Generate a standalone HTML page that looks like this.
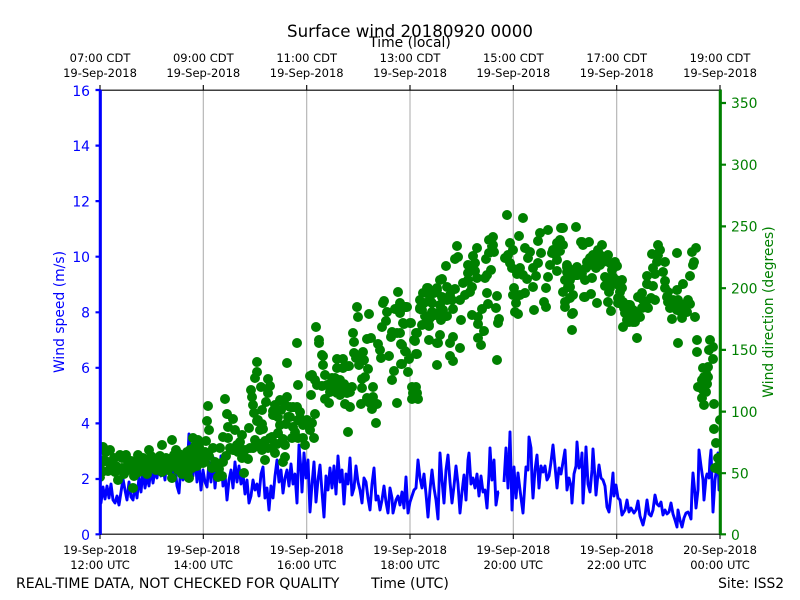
<!DOCTYPE html>
<html>
<head>
<meta charset="utf-8">
<style>
html,body{margin:0;padding:0;background:#fff;width:800px;height:600px;overflow:hidden}
svg{display:block}
text{font-family:"DejaVu Sans",sans-serif}
</style>
</head>
<body>
<svg width="800" height="600" viewBox="0 0 800 600" xmlns="http://www.w3.org/2000/svg">
<defs><clipPath id="c"><rect x="100" y="90" width="620" height="444.5"/></clipPath></defs>
<rect width="800" height="600" fill="#fff"/>
<path d="M203.3 90V534M306.7 90V534M410 90V534M513.3 90V534M616.7 90V534" stroke="#b0b0b0" stroke-width="1.1" fill="none"/>
<g clip-path="url(#c)">
<path fill="none" stroke="#00f" stroke-width="2.9" stroke-linejoin="round" d="M100 490L101 503 103 487 105 499 107 486 109 498 111 484 113 500 115 503 117 496 119 505 121 492 123 479 125 490 127 500 129 482 131 497 133 500 135 485 137 498 139 477 141 492 143 470 145 488 147 476 149 486 151 468 153 483 155 470 157 478 159 462 161 476 163 466 165 480 167 455 169 470 171 462 173 478 175 466 177 486 179 493 181 464 183 480 185 458 187 474 189 434 191 468 193 476 195 456 197 482 199 464 201 490 203 470 205 482 207 487 209 462 211 482 213 457 215 488 217 466 219 478 221 456 223 486 225 474 227 500 229 480 231 470 233 488 235 462 237 482 239 466 241 484 243 474 245 494 247 480 249 503 251 496 253 480 255 490 257 484 259 496 261 474 263 467 265 498 267 488 269 510 271 486 273 498 275 476 277 460 279 482 281 470 283 493 285 478 287 470 289 486 291 464 293 484 295 474 297 503 299 445 301 470 302 492 304 453 306 478 308 460 310 512 312 484 314 462 316 502 318 480 320 465 322 492 324 517 326 476 328 490 330 468 332 488 334 466 336 494 338 456 340 482 342 470 344 504 346 474 348 484 350 458 352 495 354 488 356 466 358 482 360 490 362 503 364 478 366 482 368 498 370 510 372 484 374 468 376 500 378 496 380 510 382 500 384 486 386 502 388 513 390 488 392 498 393 513 396 500 398 496 400 505 402 492 404 508 406 477 408 513 410 502 412 496 414 490 416 488 418 460 420 478 422 488 424 474 426 494 428 517 430 490 432 470 434 488 436 500 438 519 440 453 442 480 444 503 446 470 448 455 450 482 452 503 454 486 456 466 458 484 460 513 462 492 464 475 466 500 468 460 469 453 471 484 473 478 475 488 477 474 479 496 481 476 483 492 485 490 487 508 489 474 490 448 492 480 494 460 496 505 498 492 499 492M504 482L506 448 508 488 510 432 512 510 514 467 516 498 518 473 520 490 523 513 525 482 526 467 528 470 529 437 531 448 532 480 533 498 535 470 537 455 539 488 541 466 543 472 545 466 547 480 549 476 551 462 553 445 555 466 557 488 559 468 561 474 563 462 565 450 567 490 569 478 571 486 572 503 574 474 576 466 577 442 579 468 581 464 582 453 583 503 585 470 586 447 588 484 590 492 592 470 593 449 595 478 596 495 598 474 599 465 601 478 603 480 605 486 607 507 609 512 611 494 613 473 614 496 616 485 618 498 620 500 622 515 625 510 627 500 629 512 631 508 634 513 636 510 638 501 640 516 643 525 645 516 647 500 649 514 651 516 653 510 655 495 657 504 659 506 661 502 663 515 665 510 667 514 669 512 671 503 673 514 675 520 677 527 678 510 680 520 682 527 684 518 686 513 688 512 690 516 691 519 692 490 693 473 695 494 696 508 698 490 699 450 701 466 703 480 704 500 706 478 707 474 709 478 710 460 711 450 713 512 715 480 717 466 718 453 719 490 720 470"/>
<path fill="none" stroke="#008000" stroke-width="10" stroke-linecap="round" d="M100 477h0M100 468h0M101 463h0M102 472h0M103 447h0M106 452h0M108 462h0M110 450h0M112 470h0M114 458h0M116 466h0M118 480h0M120 455h0M122 468h0M124 474h0M126 455h0M128 462h0M130 470h0M133 488h0M134 476h0M136 462h0M138 455h0M139 472h0M141 466h0M143 458h0M145 470h0M147 474h0M149 450h0M150 460h0M152 466h0M154 458h0M156 470h0M158 463h0M160 456h0M162 445h0M162 472h0M164 465h0M166 458h0M168 470h0M170 461h0M172 440h0M172 478h0M174 455h0M176 450h0M176 466h0M178 470h0M180 460h0M182 474h0M184 465h0M186 462h0M188 472h0M189 478h0M190 450h0M192 468h0M193 438h0M194 460h0M196 452h0M197 466h0M198 440h0M199 447h0M201 458h0M203 463h0M206 441h0M205 452h0M208 406h0M207 421h0M209 430h0M212 468h0M213 448h0M218 477h0M220 448h0M222 476h0M223 462h0M223 437h0M225 399h0M227 414h0M228 427h0M228 438h0M230 448h0M233 419h0M235 430h0M237 445h0M240 442h0M242 435h0M242 458h0M244 473h0M248 459h0M249 428h0M250 448h0M253 448h0M251 390h0M252 397h0M253 405h0M254 413h0M255 378h0M257 362h0M257 372h0M257 421h0M258 420h0M260 430h0M261 387h0M262 424h0M263 429h0M262 450h0M265 441h0M265 460h0M268 379h0M270 386h0M268 393h0M270 438h0M272 437h0M273 411h0M273 415h0M273 447h0M275 453h0M278 417h0M278 433h0M280 400h0M280 425h0M283 439h0M283 462h0M285 457h0M285 405h0M287 397h0M287 363h0M288 417h0M290 407h0M290 417h0M293 407h0M293 427h0M292 438h0M297 343h0M298 385h0M297 407h0M300 412h0M300 418h0M298 420h0M298 438h0M303 438h0M305 445h0M307 420h0M310 430h0M312 423h0M314 438h0M315 414h0M316 327h0M319 340h0M319 343h0M322 355h0M323 356h0M323 365h0M310 376h0M312 375h0M315 380h0M317 385h0M311 395h0M325 375h0M332 378h0M340 380h0M327 385h0M335 387h0M342 388h0M330 392h0M337 393h0M347 393h0M352 387h0M350 392h0M325 399h0M329 403h0M340 395h0M345 404h0M350 407h0M348 432h0M376 423h0M361 404h0M367 398h0M373 397h0M373 387h0M377 404h0M372 409h0M370 403h0M397 403h0M412 387h0M416 387h0M417 393h0M412 399h0M418 399h0M413 393h0M337 359h0M343 359h0M337 368h0M343 368h0M349 366h0M362 379h0M365 377h0M368 369h0M362 388h0M353 333h0M354 342h0M354 353h0M356 358h0M363 352h0M364 360h0M359 365h0M367 339h0M371 338h0M357 307h0M358 317h0M369 314h0M398 292h0M384 301h0M383 303h0M395 309h0M400 303h0M387 312h0M400 312h0M407 307h0M386 321h0M382 327h0M404 324h0M411 323h0M392 332h0M397 333h0M391 337h0M378 344h0M380 350h0M389 356h0M381 358h0M401 344h0M405 351h0M409 358h0M417 354h0M401 364h0M394 371h0M392 380h0M408 372h0M415 341h0M417 333h0M429 340h0M437 365h0M437 343h0M440 335h0M422 325h0M429 325h0M430 318h0M437 313h0M420 309h0M423 293h0M428 288h0M430 297h0M437 290h0M440 280h0M507 215h0M523 218h0M576 227h0M561 228h0M548 230h0M540 233h0M538 241h0M519 236h0M493 237h0M489 240h0M493 245h0M457 246h0M477 248h0M494 252h0M489 253h0M473 256h0M486 259h0M458 257h0M455 259h0M446 266h0M468 265h0M475 263h0M475 271h0M468 273h0M491 270h0M485 278h0M487 275h0M442 279h0M463 283h0M472 287h0M447 287h0M455 289h0M465 295h0M460 300h0M450 295h0M447 300h0M487 293h0M497 296h0M488 304h0M482 309h0M496 308h0M453 309h0M440 305h0M443 310h0M437 288h0M427 288h0M423 293h0M430 297h0M432 303h0M420 308h0M422 310h0M438 313h0M447 316h0M435 315h0M428 320h0M422 325h0M429 326h0M461 320h0M472 315h0M478 317h0M478 324h0M484 331h0M478 338h0M481 345h0M499 319h0M498 323h0M440 335h0M429 340h0M438 343h0M453 337h0M450 343h0M460 348h0M450 356h0M453 361h0M437 365h0M497 360h0M416 333h0M414 340h0M416 354h0M409 359h0M406 352h0M402 345h0M402 364h0M408 372h0M400 333h0M405 307h0M400 313h0M410 323h0M403 323h0M510 243h0M513 250h0M508 255h0M505 258h0M510 263h0M512 268h0M520 268h0M517 274h0M527 279h0M523 275h0M525 248h0M530 252h0M528 258h0M541 253h0M538 263h0M533 268h0M536 276h0M548 277h0M557 243h0M560 240h0M563 245h0M553 250h0M560 251h0M552 253h0M557 260h0M550 265h0M557 271h0M567 265h0M567 272h0M577 267h0M575 275h0M582 273h0M585 280h0M592 278h0M566 280h0M570 287h0M563 292h0M573 295h0M565 302h0M565 307h0M573 313h0M572 330h0M570 298h0M582 242h0M589 242h0M583 245h0M514 288h0M513 295h0M525 293h0M520 295h0M516 303h0M515 312h0M518 314h0M533 287h0M546 288h0M534 310h0M544 302h0M546 307h0M585 297h0M591 294h0M597 303h0M608 302h0M611 311h0M602 245h0M598 250h0M608 255h0M593 255h0M590 258h0M587 262h0M597 262h0M603 262h0M592 265h0M600 265h0M615 262h0M617 266h0M610 263h0M605 277h0M610 278h0M616 280h0M622 280h0M605 286h0M610 288h0M620 287h0M609 292h0M618 298h0M623 302h0M630 305h0M633 310h0M627 312h0M630 318h0M635 322h0M623 327h0M637 338h0M563 228h0M581 242h0M613 277h0M622 288h0M584 297h0M572 314h0M568 287h0M565 280h0M567 267h0M577 268h0M578 275h0M620 298h0M623 303h0M628 305h0M625 313h0M635 313h0M640 317h0M633 322h0M627 320h0M658 245h0M652 254h0M658 255h0M657 262h0M665 262h0M653 268h0M663 272h0M647 276h0M665 281h0M647 284h0M653 286h0M665 288h0M642 293h0M638 297h0M643 300h0M651 298h0M667 297h0M668 302h0M648 308h0M670 308h0M677 310h0M672 319h0M682 318h0M677 253h0M677 290h0M683 284h0M678 300h0M688 300h0M683 305h0M690 304h0M695 317h0M687 312h0M690 276h0M693 265h0M694 262h0M692 252h0M696 248h0M678 343h0M697 340h0M697 352h0M710 340h0M713 347h0M709 350h0M713 359h0M708 367h0M703 368h0M708 377h0M702 380h0M705 383h0M698 387h0M703 390h0M702 398h0M704 405h0M714 404h0M720 420h0M714 429h0M716 443h0M718 458h0M717 467h0M720 463h0M715 468h0M720 470h0M104 460h0M108 471h0M115 472h0M122 458h0M126 470h0M131 461h0M137 467h0M144 464h0M148 468h0M151 456h0M155 464h0M161 464h0M167 464h0M172 458h0M179 454h0M183 456h0M187 452h0M191 458h0M195 446h0M200 452h0M205 462h0M209 456h0M215 462h0M219 469h0M226 456h0M233 450h0M238 452h0M245 450h0M255 440h0M260 444h0M268 448h0M277 444h0M285 445h0M295 432h0M262 410h0M266 402h0M275 405h0M281 410h0M286 424h0M303 425h0M330 384h0M335 378h0M344 384h0M340 388h0M322 386h0M420 300h0M424 303h0M434 293h0M442 297h0M432 312h0M425 316h0M441 320h0M452 300h0M468 280h0M470 292h0M477 278h0M492 246h0M558 247h0M556 255h0M573 270h0M570 280h0M600 255h0M594 260h0M586 268h0M596 268h0M604 258h0M612 270h0M607 283h0M614 284h0M620 292h0M618 303h0M624 308h0M631 312h0M629 322h0M636 316h0M642 308h0M646 302h0M640 296h0M655 300h0M660 250h0M655 274h0M668 292h0M673 300h0M676 304h0M681 312h0M706 372h0M704 377h0M707 384h0M706 392h0"/>
</g>
<path d="M100 90.200H720M100 534.200H720" stroke="#000" stroke-width="1.1" fill="none"/>
<path d="M100.300 89.500V535" stroke="#00f" stroke-width="3.1" fill="none"/>
<path d="M720.300 89.500V535" stroke="#008000" stroke-width="3.1" fill="none"/>
<path d="M100 90V85M203.300 90V85M306.700 90V85M410 90V85M513.300 90V85M616.700 90V85M720 90V85M100 534V539M203.300 534V539M306.700 534V539M410 534V539M513.300 534V539M616.700 534V539M720 534V539" stroke="#000" stroke-width="1.1" fill="none"/>
<path d="M95.500 90H100M95.500 145.600H100M95.500 201.100H100M95.500 256.700H100M95.500 312.300H100M95.500 367.800H100M95.500 423.400H100M95.500 479H100M95.500 534.300H100" stroke="#00f" stroke-width="2.2" fill="none"/>
<path d="M720 103H726M720 164.700H726M720 226.400H726M720 288.200H726M720 349.900H726M720 411.600H726M720 473.200H726M720 534.300H726" stroke="#008000" stroke-width="2.2" fill="none"/>

<g font-size="13.9" fill="#00f" text-anchor="end">
<text x="90" y="96">16</text><text x="90" y="151">14</text><text x="90" y="206.500">12</text><text x="90" y="262">10</text><text x="90" y="317.500">8</text><text x="90" y="373">6</text><text x="90" y="428.500">4</text><text x="90" y="484">2</text><text x="90" y="540">0</text>
</g>
<g font-size="13.9" fill="#008000">
<text x="731" y="108">350</text><text x="731" y="170">300</text><text x="731" y="231.500">250</text><text x="731" y="293.500">200</text><text x="731" y="355">150</text><text x="731" y="417">100</text><text x="731" y="478.500">50</text><text x="731" y="540">0</text>
</g>
<text x="410" y="37" font-size="16.67" text-anchor="middle" fill="#000">Surface wind 20180920 0000</text>
<text x="410" y="47" font-size="13.9" text-anchor="middle" fill="#000">Time (local)</text>
<g font-size="11.500" text-anchor="middle" fill="#000">
<text x="100" y="62">07:00 CDT</text><text x="100" y="77">19-Sep-2018</text>
<text x="203.300" y="62">09:00 CDT</text><text x="203.300" y="77">19-Sep-2018</text>
<text x="306.700" y="62">11:00 CDT</text><text x="306.700" y="77">19-Sep-2018</text>
<text x="410" y="62">13:00 CDT</text><text x="410" y="77">19-Sep-2018</text>
<text x="513.300" y="62">15:00 CDT</text><text x="513.300" y="77">19-Sep-2018</text>
<text x="616.700" y="62">17:00 CDT</text><text x="616.700" y="77">19-Sep-2018</text>
<text x="720" y="62">19:00 CDT</text><text x="720" y="77">19-Sep-2018</text>
<text x="100" y="554">19-Sep-2018</text><text x="100" y="569">12:00 UTC</text>
<text x="203.300" y="554">19-Sep-2018</text><text x="203.300" y="569">14:00 UTC</text>
<text x="306.700" y="554">19-Sep-2018</text><text x="306.700" y="569">16:00 UTC</text>
<text x="410" y="554">19-Sep-2018</text><text x="410" y="569">18:00 UTC</text>
<text x="513.300" y="554">19-Sep-2018</text><text x="513.300" y="569">20:00 UTC</text>
<text x="616.700" y="554">19-Sep-2018</text><text x="616.700" y="569">22:00 UTC</text>
<text x="720" y="554">20-Sep-2018</text><text x="720" y="569">00:00 UTC</text>
</g>
<g font-size="14.050" fill="#000">
<text x="16" y="588">REAL-TIME DATA, NOT CHECKED FOR QUALITY</text>
<text x="410" y="588" text-anchor="middle">Time (UTC)</text>
<text x="784" y="588" text-anchor="end" font-size="13.800">Site: ISS2</text>
</g>
<text transform="translate(64 312) rotate(-90)" font-size="13.9" text-anchor="middle" fill="#00f">Wind speed (m/s)</text>
<text transform="translate(773 312) rotate(-90)" font-size="13.9" text-anchor="middle" fill="#008000">Wind direction (degrees)</text>
</svg>
</body>
</html>
